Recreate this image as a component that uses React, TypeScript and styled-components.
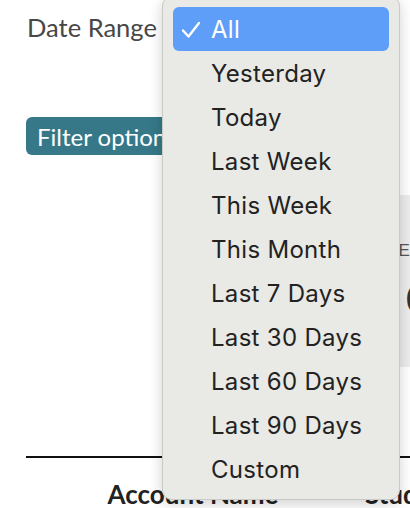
import styled, { createGlobalStyle } from "styled-components";

const GlobalStyle = createGlobalStyle`
  html, body {
    margin: 0;
    padding: 0;
    background: #fff;
    overflow: hidden;
  }
  body {
    font-family: Lato, "Liberation Sans", sans-serif;
  }
`;

const Page = styled.div`
  position: relative;
  width: 410px;
  height: 508px;
  overflow: hidden;
  padding: 0 0 0 26px;
  box-sizing: border-box;
`;

const FilterRow = styled.div`
  display: flex;
  align-items: center;
  height: 56px;
`;

const Label = styled.label`
  font-family: Lato, sans-serif;
  font-size: 25.5px;
  color: #474747;
  padding-left: 1px;
  margin-top: -2px;
`;

const FilterButton = styled.button`
  margin-top: 61px;
  height: 38px;
  padding: 0 11px;
  border: none;
  border-radius: 6px;
  background: #367888;
  color: #fff;
  font-family: Lato, sans-serif;
  font-size: 24px;
  white-space: nowrap;
  display: block;
`;

const SummaryCard = styled.div`
  margin-top: 40px;
  margin-left: 150px;
  height: 172px;
  background: #ececec;
  display: flex;
  flex-direction: column;
  align-items: flex-end;
  overflow: hidden;
`;

const StatLabel = styled.div`
  margin-top: 46px;
  margin-right: -14px;
  font-family: "Liberation Sans", sans-serif;
  font-size: 17px;
  letter-spacing: 1px;
  color: #555;
`;

const StatValue = styled.div`
  margin-top: 14px;
  margin-right: -18px;
  font-family: Lato, sans-serif;
  font-size: 38px;
  color: #333;
`;

const Table = styled.div`
  margin-top: 89px;
  border-top: 2px solid #111;
  display: grid;
  grid-template-columns: 334px 120px;
`;

const HeadCell = styled.div<{ $align?: "left" | "center" }>`
  padding-top: 20px;
  padding-left: ${(p) => (p.$align === "left" ? "5px" : "0")};
  text-align: ${(p) => p.$align ?? "center"};
  font-family: Lato, sans-serif;
  font-weight: 700;
  font-size: 26px;
  color: #222;
  white-space: nowrap;
`;

const Menu = styled.ul`
  position: absolute;
  left: 162px;
  top: -4px;
  width: 238px;
  height: 504px;
  margin: 0;
  padding: 10px 10px 0;
  box-sizing: border-box;
  list-style: none;
  background: #e9e9e5;
  border: 1px solid #c9c9c5;
  border-radius: 10px;
  box-shadow: 0 4px 14px rgba(0, 0, 0, 0.18);
`;

const Item = styled.li<{ $selected?: boolean }>`
  position: relative;
  height: 44px;
  display: flex;
  align-items: center;
  padding-left: 38px;
  border-radius: 6px;
  font-family: Inter, "Liberation Sans", sans-serif;
  font-size: 24px;
  letter-spacing: 0.3px;
  color: ${(p) => (p.$selected ? "#fff" : "#222")};
  background: ${(p) => (p.$selected ? "#5f9ef8" : "transparent")};
`;

const Check = styled.svg`
  position: absolute;
  left: 8px;
  top: 14px;
  width: 20px;
  height: 18px;
`;

const options = [
  "All",
  "Yesterday",
  "Today",
  "Last Week",
  "This Week",
  "This Month",
  "Last 7 Days",
  "Last 30 Days",
  "Last 60 Days",
  "Last 90 Days",
  "Custom",
];

export default function App() {
  const selected = "All";
  return (
    <>
      <GlobalStyle />
      <Page>
        <FilterRow>
          <Label>Date Range</Label>
        </FilterRow>
        <FilterButton>Filter options</FilterButton>
        <SummaryCard>
          <StatLabel>ED</StatLabel>
          <StatValue>0</StatValue>
        </SummaryCard>
        <Table>
          <HeadCell>Account Name</HeadCell>
          <HeadCell $align="left">Student</HeadCell>
        </Table>
        <Menu>
          {options.map((o) => (
            <Item key={o} $selected={o === selected}>
              {o === selected && (
                <Check viewBox="0 0 20 18">
                  <path
                    d="M2 9.5 L7.5 15.5 L18 2"
                    fill="none"
                    stroke="#fff"
                    strokeWidth="2.4"
                    strokeLinecap="round"
                    strokeLinejoin="round"
                  />
                </Check>
              )}
              {o}
            </Item>
          ))}
        </Menu>
      </Page>
    </>
  );
}
